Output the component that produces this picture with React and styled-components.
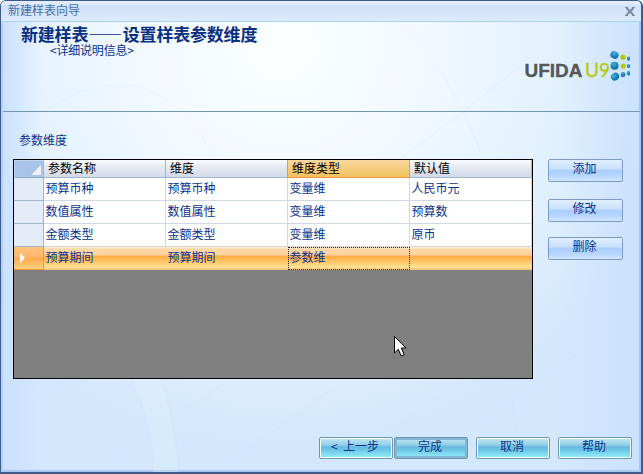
import React from "react";
import styled, { createGlobalStyle, css } from "styled-components";

const GlobalStyle = createGlobalStyle`
  * { box-sizing: border-box; }
  body { margin: 0; background: #fff; overflow: hidden; }
  button { font: inherit; }
`;

const Dialog = styled.main`
  position: relative;
  display: flex;
  flex-direction: column;
  width: 643px;
  height: 474px;
  overflow: hidden;
  border: 1px solid #3d5c8c;
  border-right-width: 2px;
  border-bottom-width: 2px;
  border-radius: 6px 6px 0 0;
  box-shadow: inset 2px 0 1px #b4cff5, inset -2px -2px 1px #a9c6ef;
  background:
    linear-gradient(90deg, #cae1fd 0, #cae1fd00 40px, #cae1fd00 560px, #cae1fdcc 630px),
    radial-gradient(ellipse 400px 400px at 280px 45px, #fbffff 0%, #f2f9ff 35%, #e2f1fe 70%, #d4e8fd 100%);
  color: #0b328a;
  font: 12px/16px "Noto Sans CJK SC", sans-serif;
`;

const Backdrop = styled.svg`
  position: absolute;
  left: 0;
  top: 0;
  pointer-events: none;
`;

const TitleBar = styled.header`
  position: relative;
  flex: none;
  display: flex;
  justify-content: space-between;
  align-items: center;
  height: 21px;
  padding: 0 6px 3px 7px;
  border-bottom: 1px solid #a8d2f2;
  background: linear-gradient(#e3edfc 0, #dce8fb 4px, #cfe0f9 5px, #dbe8fa 17px, #d8edfc 20px);
  color: #4470ad;
`;

const CloseIcon = styled.svg`
  display: block;
  margin-top: 4px;
`;

const Banner = styled.section`
  position: relative;
  flex: none;
  display: flex;
  justify-content: space-between;
  height: 90px;
  margin: 0 1px 0 2px;
  padding-left: 18px;
  border-bottom: 1px solid #7197b9;
`;

const Heading = styled.h1`
  margin: 0;
  font-size: 17px;
  line-height: 24px;
  letter-spacing: -0.2px;
  font-weight: 700;
  white-space: nowrap;
  color: #0a2f80;
`;

const Dash = styled.span`
  font-weight: 400;
  letter-spacing: 0.6px;
`;

const Detail = styled.p`
  margin: -4px 0 0 29px;
  line-height: 16px;
  letter-spacing: -0.2px;
`;

const Logo = styled.svg`
  flex: none;
  margin: 25px 4px 0 0;
`;

const SectionLabel = styled.h2`
  position: relative;
  flex: none;
  margin: 20px 0 0 18px;
  height: 27px;
  font-size: 12px;
  line-height: 16px;
  font-weight: 400;
`;

const Content = styled.section`
  position: relative;
  flex: none;
  display: flex;
  gap: 15px;
  padding-left: 12px;
`;

const GridView = styled.div`
  position: relative;
  flex: none;
  width: 520px;
  height: 220px;
  border: 1px solid #000;
  background: #808080;
`;

const columns = css`
  display: grid;
  grid-template-columns: 30px repeat(4, 122px);
`;

const HeaderRow = styled.div`
  ${columns}
  height: 18px;
  color: #000;
`;

const Corner = styled.div`
  display: flex;
  justify-content: flex-end;
  align-items: flex-end;
  padding: 0 2px 2px 0;
  border: 1px solid #c4d6ef;
  border-right-color: #9eb6d7;
  border-bottom-color: #8fa9cd;
  background: #a9c4e9;
`;

const HeaderCell = styled.div`
  padding-left: 4px;
  line-height: 16px;
  border-right: 1px solid ${(p) => (p.$active || p.$beforeActive ? "#f29536" : "#9eb6ce")};
  border-bottom: 1px solid ${(p) => (p.$active ? "#f29536" : "#9eb6ce")};
  background: ${(p) =>
    p.$active ? "linear-gradient(#f9d99f, #f1c15f)" : "linear-gradient(#f9fcfd, #e4e9f1 45%, #d3dbe9)"};
`;

const Row = styled.div`
  ${columns}
  height: 23px;
  background: ${(p) =>
    p.$selected
      ? "linear-gradient(#fff0d8 0, #fcd9a8 2px, #fdd2a0 8px, #ffab3f 9px, #ffbd5c 13px, #ffe393 20px, #f7c77b 22px)"
      : "#fff"};
`;

const RowHeader = styled.div`
  display: flex;
  align-items: center;
  padding-left: 6px;
  border-right: 1px solid ${(p) => (p.$selected ? "#f29536" : "#9eb6ce")};
  border-bottom: 1px solid ${(p) => (p.$selected ? "#f29536" : "#9eb6ce")};
  background: ${(p) => (p.$selected ? "linear-gradient(#ffc37c, #ffb86c 45%, #ffa94b 50%, #ffd084)" : "#e4ecf7")};
`;

const Cell = styled.div`
  padding: 2px 0 0 1.5px;
  line-height: 16px;
  border-right: 1px solid ${(p) => (p.$selected ? "transparent" : "#d0d7e5")};
  border-bottom: 1px solid ${(p) => (p.$selected ? "transparent" : "#d0d7e5")};
  ${(p) =>
    p.$focused &&
    css`
      padding: 1px 0 0 0.5px;
      border: 1px dotted #222;
    `}
`;

const Pointer = styled.svg`
  position: absolute;
  left: 380px;
  top: 176px;
`;

const Actions = styled.div`
  display: flex;
  flex-direction: column;
`;

const ActionButton = styled.button`
  width: 75px;
  height: 23px;
  margin-bottom: ${(p) => p.$gap || 0}px;
  padding: 0 2px 5px 0;
  line-height: 16px;
  border: 1px solid #7c9aca;
  border-radius: 2px;
  background: linear-gradient(#e1efff 0, #c9e0ff 9px, #adcfff 10px, #b3d3ff 15px, #d1e6ff 21px);
  color: #0b328a;
`;

const Footer = styled.footer`
  position: relative;
  display: flex;
  margin-top: 58px;
  padding-left: 318px;
`;

const WizardButton = styled.button`
  width: 74px;
  height: 22px;
  margin-right: ${(p) => p.$gap}px;
  padding: 0 2px 4px 0;
  line-height: 16px;
  white-space: pre;
  border: 1px solid #7196b4;
  border-radius: 2px;
  box-shadow: ${(p) => (p.$default ? "inset 0 0 0 2px #83b6cf" : "inset 0 0 0 1px #f5ffff")};
  background: linear-gradient(#c5e9f5 0, #91cfe8 7px, #64bbdf 9px, #72cbe8 13px, #96f1fb 20px);
  color: #0b328a;
`;

const headers = ["参数名称", "维度", "维度类型", "默认值"];
const rows = [
  ["预算币种", "预算币种", "变量维", "人民币元"],
  ["数值属性", "数值属性", "变量维", "预算数"],
  ["金额类型", "金额类型", "变量维", "原币"],
  ["预算期间", "预算期间", "参数维", ""],
];
const activeColumn = 2;
const selectedRow = 3;

function BackgroundArcs() {
  return (
    <Backdrop width="640" height="471" fill="none" aria-hidden="true">
      <path d="M130 377Q150 410 152 471H177Q175 420 158 377Z" fill="#e2f1ff" opacity=".3" />
      <g stroke="#bcd8f4" opacity=".18">
        <path d="M128 377Q151 417 153 471M159 377Q175 420 178 471M24 407L66 379M174 418L226 380M106 463L138 443M230 461L330 389M393 428L464 377M475 428L580 350M400 20Q455 80 482 158M395 160Q440 130 520 64M511 378Q510 410 515 430M44 110Q150 40 215 158" />
      </g>
    </Backdrop>
  );
}

function BrandLogo() {
  return (
    <Logo width="112" height="38" aria-label="UFIDA U9">
      <defs>
        <radialGradient id="blueDot" cx=".4" cy=".3" r=".7">
          <stop offset="0" stopColor="#3fb4e0" />
          <stop offset="1" stopColor="#08669f" />
        </radialGradient>
      </defs>
      <text x="0.5" y="29.5" textLength="58" lengthAdjust="spacingAndGlyphs" fontFamily="Liberation Sans" fontSize="19" fontWeight="700" fill="#555759" stroke="#555759" strokeWidth=".3">UFIDA</text>
      <text x="61" y="29.5" textLength="25" lengthAdjust="spacingAndGlyphs" fontFamily="Lato" fontSize="19" fill="#b3c90c" stroke="#b3c90c" strokeWidth=".3">U9</text>
      <g fill="url(#blueDot)">
        <ellipse cx="90.5" cy="8" rx="4.2" ry="3.6" transform="rotate(25 90.5 8)" />
        <circle cx="90.5" cy="18.7" r="4" />
        <ellipse cx="91" cy="29.7" rx="4.2" ry="3.8" transform="rotate(-30 91 29.7)" />
        <ellipse cx="99" cy="27.5" rx="2.3" ry="2.6" />
        <ellipse cx="104.5" cy="11.7" rx="1.6" ry="2.1" />
        <ellipse cx="104.5" cy="19" rx="1.6" ry="2.1" />
        <ellipse cx="104.5" cy="26.3" rx="1.6" ry="2.3" />
      </g>
      <circle cx="99" cy="10.2" r="2.6" fill="#b3c90c" />
      <circle cx="99.2" cy="19" r="2.6" fill="#b3c90c" />
    </Logo>
  );
}

export default function App() {
  return (
    <>
      <GlobalStyle />
      <Dialog lang="zh-CN">
        <BackgroundArcs />
        <TitleBar>
          <span>新建样表向导</span>
          <CloseIcon width="10" height="9" viewBox="0 0 10 9">
            <path d="M1.5 1L8.5 8M8.5 1L1.5 8" stroke="#7888a5" strokeWidth="2" />
            <path d="M0 .5H3M7 .5H10M0 8.5H3M7 8.5H10" stroke="#7888a5" />
          </CloseIcon>
        </TitleBar>
        <Banner>
          <div>
            <Heading>新建样表<Dash>——</Dash>设置样表参数维度</Heading>
            <Detail>&lt;详细说明信息&gt;</Detail>
          </div>
          <BrandLogo />
        </Banner>
        <SectionLabel>参数维度</SectionLabel>
        <Content>
          <GridView>
            <HeaderRow>
              <Corner>
                <svg width="10" height="10"><path d="M10 0V10H0Z" fill="#edf2fa" /></svg>
              </Corner>
              {headers.map((name, i) => (
                <HeaderCell key={name} $active={i === activeColumn} $beforeActive={i + 1 === activeColumn}>
                  {name}
                </HeaderCell>
              ))}
            </HeaderRow>
            {rows.map((row, r) => (
              <Row key={r} $selected={r === selectedRow}>
                <RowHeader $selected={r === selectedRow}>
                  {r === selectedRow && (
                    <svg width="5" height="10"><path d="M0 0L5 5L0 10Z" fill="#fff" /></svg>
                  )}
                </RowHeader>
                {row.map((value, c) => (
                  <Cell key={c} $selected={r === selectedRow} $focused={r === selectedRow && c === activeColumn}>
                    {value}
                  </Cell>
                ))}
              </Row>
            ))}
            <Pointer width="13" height="21">
              <path d="M.5 .5V17L4.3 13.3L7.2 20L10.2 18.7L7.3 12H12Z" fill="#fff" stroke="#000" />
            </Pointer>
          </GridView>
          <Actions>
            <ActionButton $gap={17}>添加</ActionButton>
            <ActionButton $gap={15}>修改</ActionButton>
            <ActionButton>删除</ActionButton>
          </Actions>
        </Content>
        <Footer>
          <WizardButton $gap={1}>{"<  上一步"}</WizardButton>
          <WizardButton $gap={8} $default>完成</WizardButton>
          <WizardButton $gap={8}>取消</WizardButton>
          <WizardButton $gap={0}>帮助</WizardButton>
        </Footer>
      </Dialog>
    </>
  );
}
